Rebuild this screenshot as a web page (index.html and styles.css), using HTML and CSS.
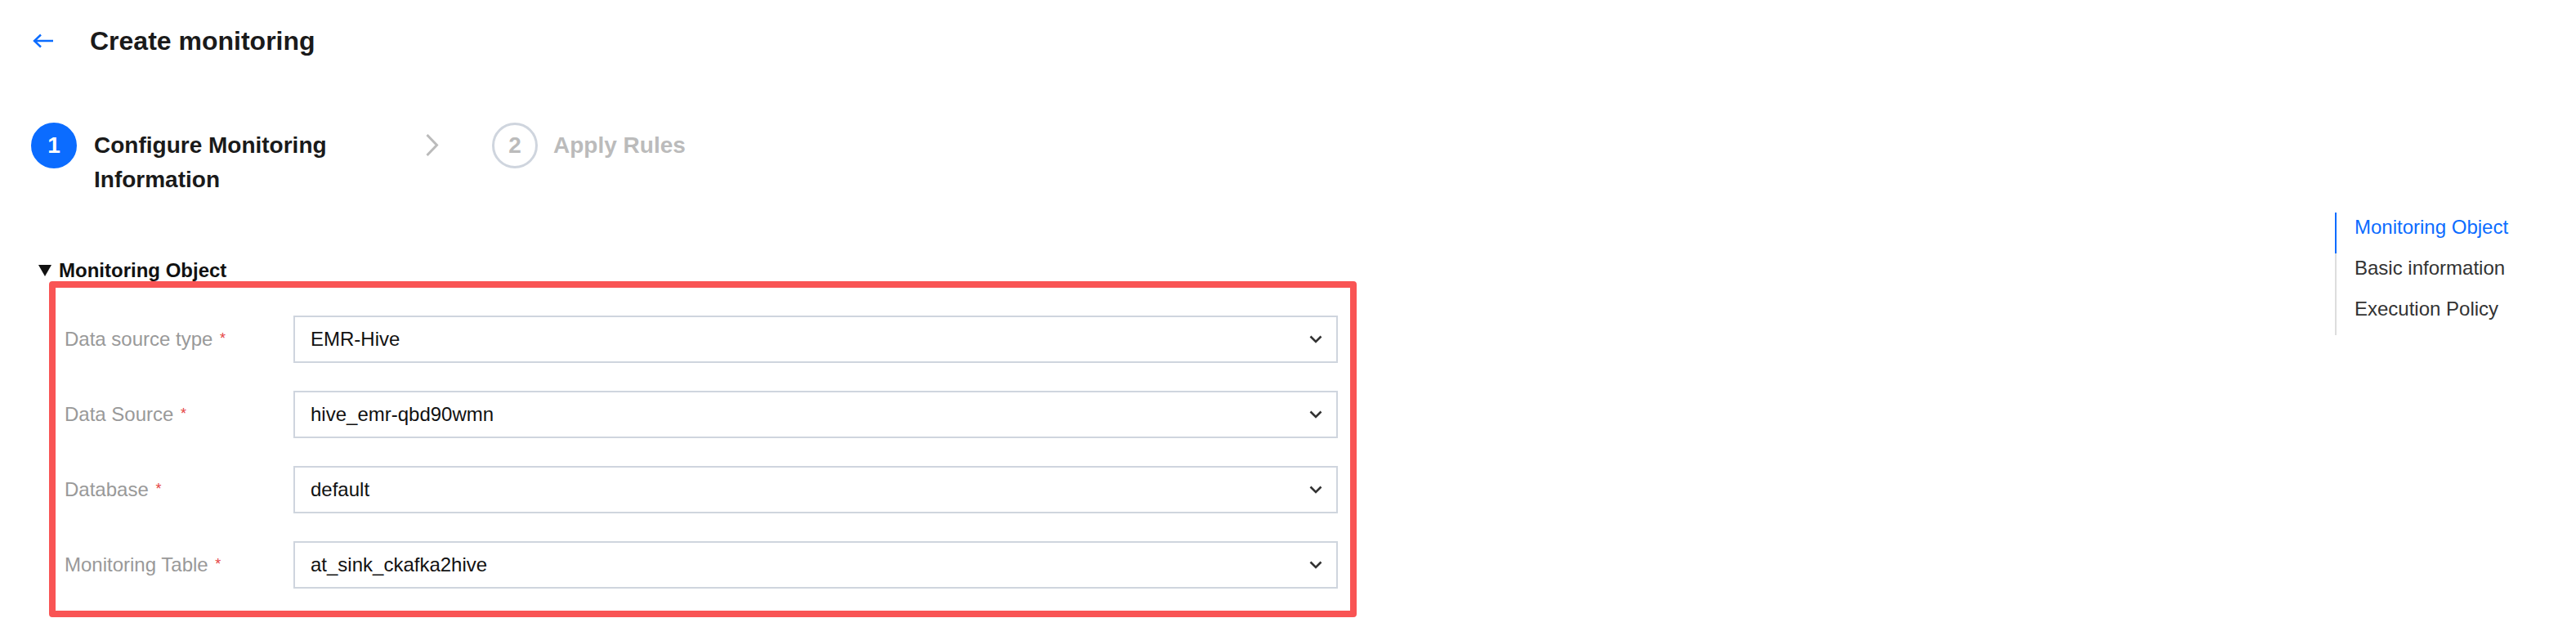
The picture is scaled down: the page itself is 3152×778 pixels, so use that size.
FILE: index.html
```html
<!DOCTYPE html>
<html>
<head>
  <title>Create monitoring</title>
  <link rel="stylesheet" href="styles.css">
</head>
<body>
  <div class="page">
    <div class="main">
      <div class="header">
        <svg class="back" width="26" height="18" viewBox="0 0 26 18">
          <path d="M25 9H2M10 1.5L2 9l8 7.5" fill="none" stroke="#0b6cff" stroke-width="2.4"/>
        </svg>
        <h1>Create monitoring</h1>
      </div>

      <div class="steps">
        <div class="step active">
          <div class="step-num">1</div>
          <div class="step-text">Configure Monitoring Information</div>
        </div>
        <svg class="step-sep" width="17" height="29" viewBox="0 0 17 29">
          <path d="M2.5 2l12 12.5-12 12.5" fill="none" stroke="#bbb" stroke-width="3"/>
        </svg>
        <div class="step">
          <div class="step-num">2</div>
          <div class="step-text">Apply Rules</div>
        </div>
      </div>

      <div class="section-title">
        <span class="caret"></span>
        Monitoring Object
      </div>

      <div class="form-box">
        <div class="form-row">
          <label>Data source type <span class="req">*</span></label>
          <div class="select">
            <span>EMR-Hive</span>
            <svg width="16" height="10" viewBox="0 0 16 10"><path d="M1.5 1.5l6.5 6.5 6.5-6.5" fill="none" stroke="#333" stroke-width="2.6"/></svg>
          </div>
        </div>
        <div class="form-row">
          <label>Data Source <span class="req">*</span></label>
          <div class="select">
            <span>hive_emr-qbd90wmn</span>
            <svg width="16" height="10" viewBox="0 0 16 10"><path d="M1.5 1.5l6.5 6.5 6.5-6.5" fill="none" stroke="#333" stroke-width="2.6"/></svg>
          </div>
        </div>
        <div class="form-row">
          <label>Database <span class="req">*</span></label>
          <div class="select">
            <span>default</span>
            <svg width="16" height="10" viewBox="0 0 16 10"><path d="M1.5 1.5l6.5 6.5 6.5-6.5" fill="none" stroke="#333" stroke-width="2.6"/></svg>
          </div>
        </div>
        <div class="form-row">
          <label>Monitoring Table <span class="req">*</span></label>
          <div class="select">
            <span>at_sink_ckafka2hive</span>
            <svg width="16" height="10" viewBox="0 0 16 10"><path d="M1.5 1.5l6.5 6.5 6.5-6.5" fill="none" stroke="#333" stroke-width="2.6"/></svg>
          </div>
        </div>
      </div>
    </div>

    <ul class="anchor">
      <li class="active">Monitoring Object</li>
      <li>Basic information</li>
      <li>Execution Policy</li>
    </ul>
  </div>
</body>
</html>
```

FILE: styles.css
```css
body {
  margin: 0;
  padding: 0;
  font-family: "Liberation Sans", Arial, sans-serif;
  color: #000;
  background-color: #fff;
}

.page {
  display: flex;
}

.main {
  flex: 1;
}

.header {
  display: flex;
  align-items: center;
  height: 100px;
  padding-left: 40px;
}

.header .back {
  margin-right: 44px;
}

.header h1 {
  margin: 0;
  font-size: 32px;
  font-weight: bold;
  color: #1a1a1a;
}

/* steps */
.steps {
  display: flex;
  align-items: flex-start;
  margin-top: 50px;
  padding-left: 38px;
}

.step {
  display: flex;
  align-items: flex-start;
}

.step-num {
  width: 50px;
  height: 50px;
  border: 3px solid #cfd5de;
  border-radius: 50%;
  display: flex;
  align-items: center;
  justify-content: center;
  font-size: 28px;
  font-weight: bold;
  color: #bbb;
}

.step.active .step-num {
  background-color: #0b6cff;
  border-color: #0b6cff;
  color: #fff;
}

.step-text {
  margin-left: 19px;
  padding-top: 7px;
  font-size: 28px;
  font-weight: bold;
  line-height: 42px;
  color: #bbb;
}

.step.active .step-text {
  width: 300px;
  margin-left: 21px;
  color: #1a1a1a;
}

.step-sep {
  margin: 13px 65px 0 105px;
}

/* section */
.section-title {
  display: flex;
  align-items: center;
  margin-top: 76px;
  padding-left: 47px;
  height: 28px;
  font-size: 24px;
  font-weight: bold;
  color: #111;
}

.caret {
  width: 0;
  height: 0;
  border-left: 8px solid transparent;
  border-right: 8px solid transparent;
  border-top: 14px solid #111;
  margin-right: 9px;
}

.form-box {
  box-sizing: border-box;
  width: 1600px;
  margin-left: 60px;
  margin-top: -1px;
  border: 8px solid #f95454;
  border-radius: 4px;
  padding: 34px 15px 27px 11px;
  display: flex;
  flex-direction: column;
  gap: 34px;
}

.form-row {
  display: flex;
  align-items: center;
}

.form-row label {
  width: 280px;
  font-size: 24px;
  color: #999;
}

.req {
  color: #e54545;
  font-size: 18px;
  margin-left: 2px;
  position: relative;
  top: -3px;
}

.select {
  flex: 1;
  height: 54px;
  border: 2px solid #cfd5de;
  display: flex;
  align-items: center;
  justify-content: space-between;
  padding: 0 17px 0 19px;
  font-size: 24px;
  color: #111;
}

/* right anchor nav */
.anchor {
  list-style: none;
  margin: 260px 0 0 0;
  padding: 0;
  width: 293px;
  align-self: flex-start;
  border-left: 2px solid #ddd;
}

.anchor li {
  font-size: 24px;
  line-height: 36px;
  padding: 0 0 14px 22px;
  color: #333;
}

.anchor li.active {
  color: #0b6cff;
  border-left: 2px solid #0b6cff;
  margin-left: -2px;
}
```
